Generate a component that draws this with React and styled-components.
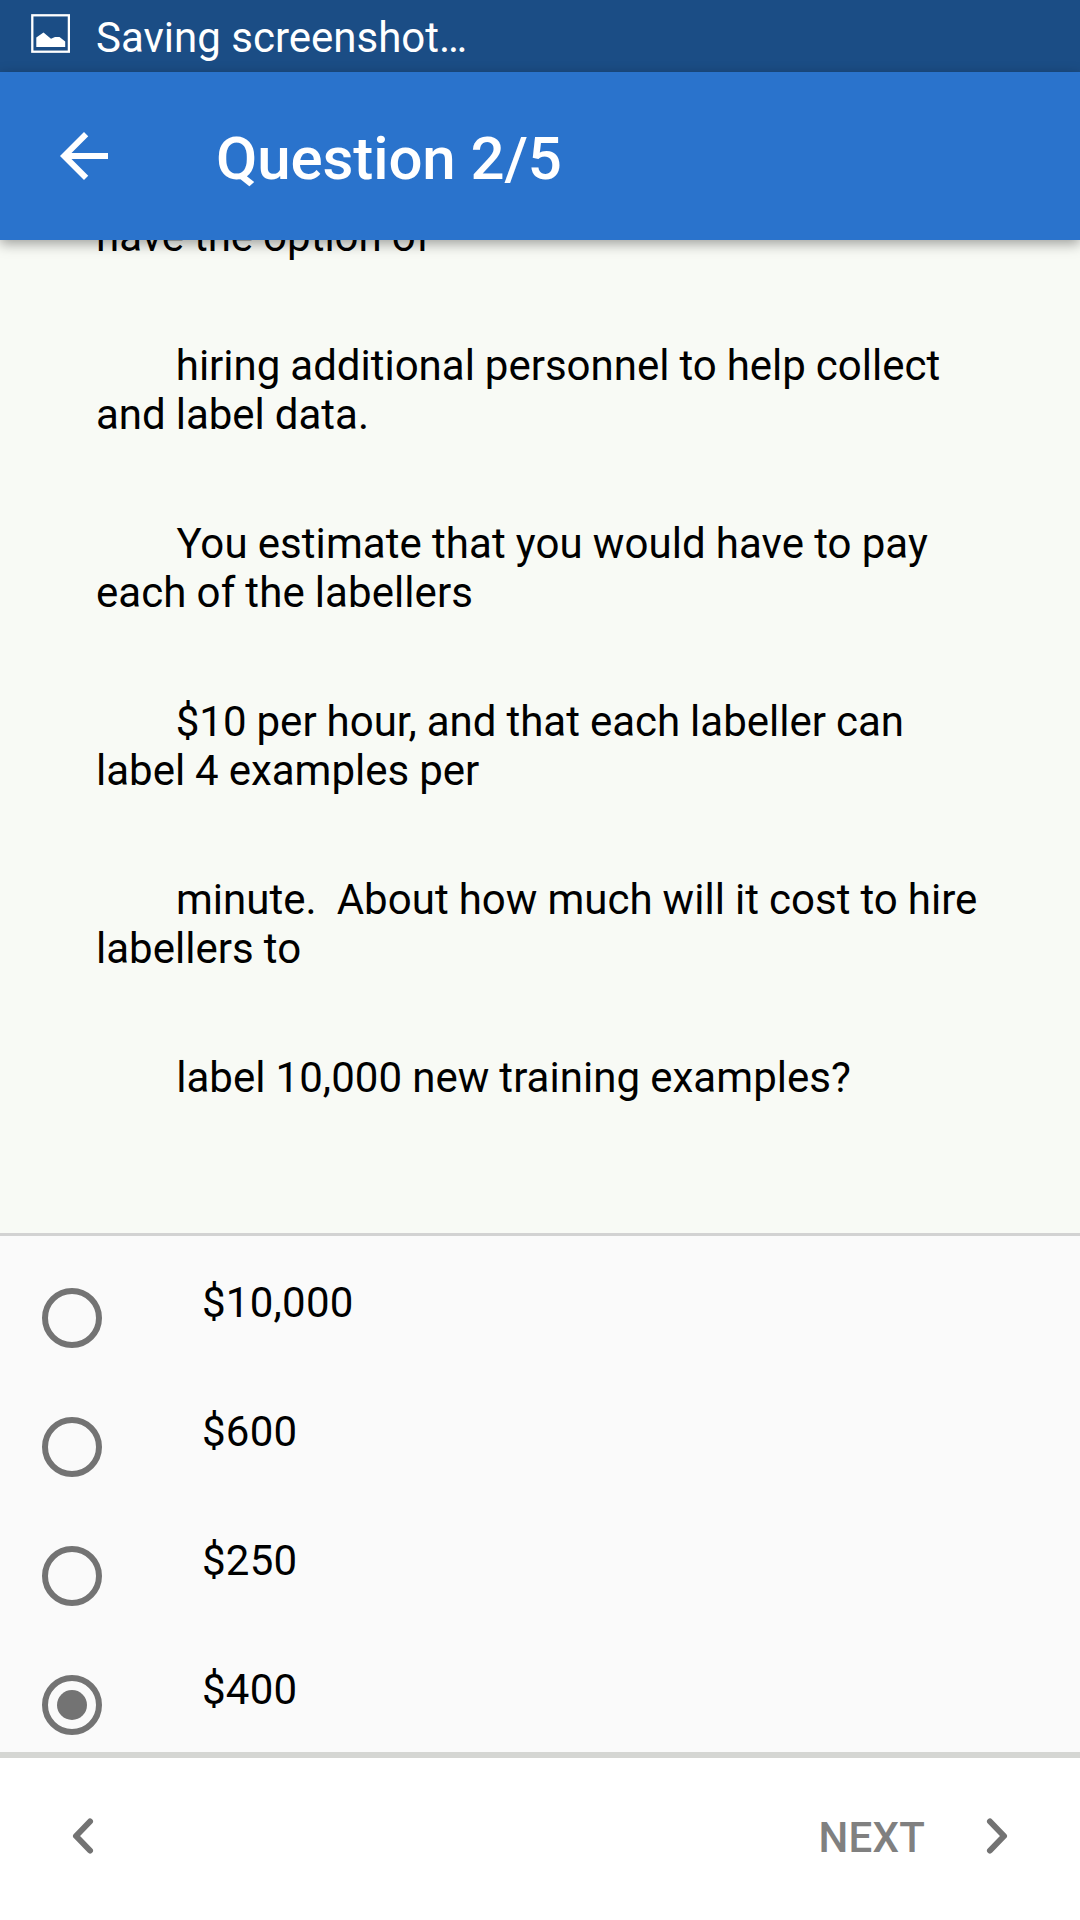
import React from "react";
import styled, { createGlobalStyle } from "styled-components";

const Global = createGlobalStyle`
  * { box-sizing: border-box; }
  body { margin: 0; font-family: Roboto, sans-serif; background: #fafafa; color: #000; }
`;

const Screen = styled.main`
  width: 1080px;
  height: 1920px;
  display: flex;
  flex-direction: column;
  overflow: hidden;
`;
const StatusBar = styled.div`
  height: 72px;
  flex: none;
  display: flex;
  align-items: center;
  gap: 26px;
  padding: 3px 0 0 31px;
  background: #1b4d85;
  color: #fff;
  font-size: 42px;
  line-height: 48px;
  svg { margin-top: -8px; }
`;
const AppBar = styled.header`
  height: 168px;
  flex: none;
  display: flex;
  align-items: center;
  padding: 0 48px;
  gap: 96px;
  background: #2a73cc;
  color: #fff;
  z-index: 1;
  box-shadow: 0 4px 12px rgba(0, 0, 0, 0.36);
`;
const Title = styled.h1`
  margin: 6px 0 0;
  font-size: 60px;
  font-weight: 500;
  line-height: 70px;
  letter-spacing: -0.1px;
`;
const Question = styled.section`
  height: 996px;
  flex: none;
  display: flex;
  flex-direction: column;
  justify-content: flex-end;
  overflow: hidden;
  padding: 0 96px 131px;
  background: #f8faf5;
  border-bottom: 3px solid #d2d2d2;
`;
const Paragraph = styled.p`
  margin: 80px 0 0;
  font-size: 42px;
  line-height: 49px;
  word-spacing: -0.45px;
  letter-spacing: ${(p) => p.$tracking || 0}px;
  white-space: pre;
`;
const Answers = styled.ul`
  height: 516px;
  flex: none;
  margin: 0;
  padding: 39px 42px 0;
  list-style: none;
  background: #fafafa;
  overflow: hidden;
`;
const Answer = styled.li`
  height: 129px;
  display: flex;
  gap: 100px;
  font-size: 42px;
  line-height: 56px;
  letter-spacing: 0.25px;
`;
const Radio = styled.span`
  width: 60px;
  height: 60px;
  margin-top: 13px;
  border: 6px solid #737373;
  border-radius: 50%;
  display: grid;
  place-items: center;
  &::after {
    content: "";
    width: 30px;
    height: 30px;
    border-radius: 50%;
    background: ${(p) => (p.$checked ? "#737373" : "transparent")};
  }
`;
const Footer = styled.footer`
  height: 168px;
  flex: none;
  display: flex;
  align-items: center;
  justify-content: space-between;
  padding: 0 70px 6px;
  background: #fff;
  border-top: 6px solid #d5d6d3;
  color: #808080;
`;
const Next = styled.div`
  display: flex;
  align-items: center;
  gap: 59px;
  font-size: 42px;
  font-weight: 500;
  letter-spacing: 0.2px;
  span { padding-top: 3px; }
`;
const Chevron = ({ d }) => (
  <svg width="26" height="40" viewBox="0 0 26 40" fill="none" stroke="#737373" strokeWidth="6" strokeLinecap="round" strokeLinejoin="round">
    <path d={d} />
  </svg>
);

const paragraphs = [
  { text: "have the option of" },
  { text: "        hiring additional personnel to help collect\nand label data." },
  { text: "        You estimate that you would have to pay\neach of the labellers", tracking: 0.08 },
  { text: "        $10 per hour, and that each labeller can\nlabel 4 examples per" },
  { text: "        minute.  About how much will it cost to hire\nlabellers to", tracking: 0.03 },
  { text: "        label 10,000 new training examples?", tracking: 0.05 },
];
const answers = ["$10,000", "$600", "$250", "$400"];

export default function App() {
  const [selected, setSelected] = React.useState(3);
  return (
    <Screen>
      <Global />
      <StatusBar>
        <svg width="39" height="39" viewBox="0 0 39 39">
          <rect x="1.3" y="1.3" width="36.6" height="36.4" fill="none" stroke="#fff" strokeWidth="2.3" />
          <path d="M5.3 33V23.5L12.5 18.5l7.5 6.2 4-1.7h4.5l5.7 4.5V33z" fill="#fff" />
        </svg>
        <span>Saving screenshot…</span>
      </StatusBar>
      <AppBar>
        <svg width="72" height="72" viewBox="0 0 24 24" fill="#fff">
          <path d="M20 11H7.83l5.59-5.59L12 4l-8 8 8 8 1.41-1.41L7.83 13H20v-2z" />
        </svg>
        <Title>Question 2/5</Title>
      </AppBar>
      <Question>
        {paragraphs.map((p) => <Paragraph key={p.text} $tracking={p.tracking}>{p.text}</Paragraph>)}
      </Question>
      <Answers>
        {answers.map((a, i) => (
          <Answer key={a} onClick={() => setSelected(i)}>
            <Radio $checked={selected === i} />
            <span>{a}</span>
          </Answer>
        ))}
      </Answers>
      <Footer>
        <Chevron d="M20 5.5L6 20l14 14.5" />
        <Next>
          <span>NEXT</span>
          <Chevron d="M6 5.5L20 20L6 34.5" />
        </Next>
      </Footer>
    </Screen>
  );
}
